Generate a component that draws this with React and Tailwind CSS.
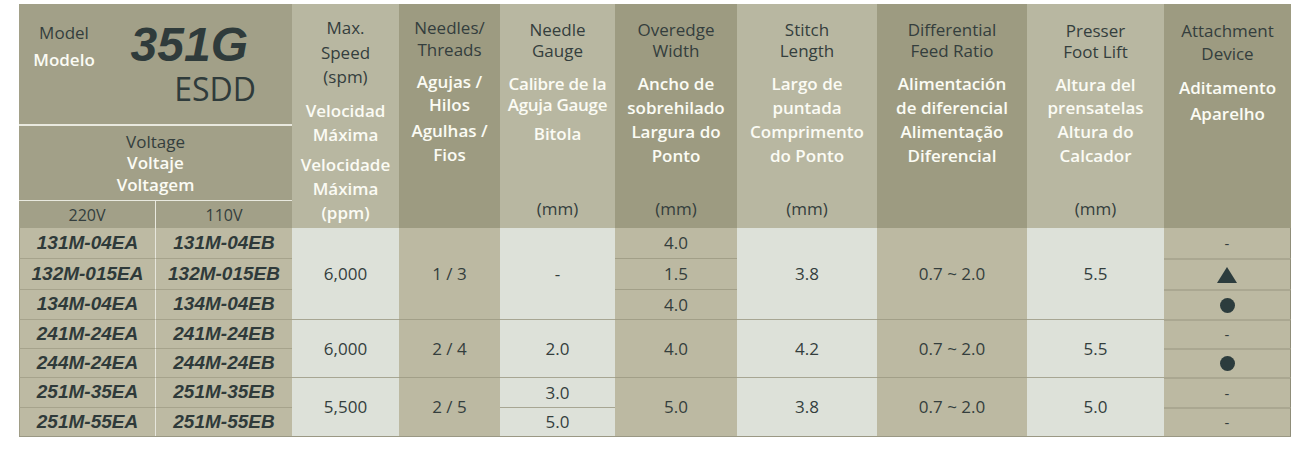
import React from 'react';

const DARK = 'text-[#343e3d]';
const WHITE = 'text-[#fbfbf4] font-semibold';

// header columns: each group of lines gets its own spacing
const headers = [
  {
    bg: 'bg-[#b8b7a1]', pt: 'pt-[12px]',
    groups: [
      { lines: ['Max.', 'Speed', '(spm)'], cls: 'leading-[24.5px]' },
      { lines: ['Velocidad', 'Máxima'], cls: 'mt-[9px] leading-[24px]', white: true },
      { lines: ['Velocidade', 'Máxima', '(ppm)'], cls: 'mt-[6px] leading-[24px]', white: true },
    ],
  },
  {
    bg: 'bg-[#9d9b81]', pt: 'pt-[13px]',
    groups: [
      { lines: ['Needles/', 'Threads'], cls: 'leading-[22px]' },
      { lines: ['Agujas /', 'Hilos'], cls: 'mt-[9px] leading-[23px]', white: true },
      { lines: ['Agulhas /', 'Fios'], cls: 'mt-[3px] leading-[24px]', white: true },
    ],
  },
  {
    bg: 'bg-[#b8b7a1]', pt: 'pt-[15px]', mm: true,
    groups: [
      { lines: ['Needle', 'Gauge'], cls: 'leading-[21px]' },
      { lines: ['Calibre de la', 'Aguja Gauge'], cls: 'mt-[12px] leading-[21px] tracking-[-0.3px]', white: true },
      { lines: ['Bitola'], cls: 'mt-[7px] leading-[24px]', white: true },
    ],
  },
  {
    bg: 'bg-[#9d9b81]', pt: 'pt-[15px]', mm: true,
    groups: [
      { lines: ['Overedge', 'Width'], cls: 'leading-[21px]' },
      { lines: ['Ancho de', 'sobrehilado'], cls: 'mt-[11px] leading-[24px]', white: true },
      { lines: ['Largura do', 'Ponto'], cls: 'leading-[24px]', white: true },
    ],
  },
  {
    bg: 'bg-[#b8b7a1]', pt: 'pt-[15px]', mm: true,
    groups: [
      { lines: ['Stitch', 'Length'], cls: 'leading-[21px]' },
      { lines: ['Largo de', 'puntada'], cls: 'mt-[11px] leading-[24px]', white: true },
      { lines: ['Comprimento', 'do Ponto'], cls: 'leading-[24px]', white: true },
    ],
  },
  {
    bg: 'bg-[#9d9b81]', pt: 'pt-[15px]',
    groups: [
      { lines: ['Differential', 'Feed Ratio'], cls: 'leading-[21px]' },
      { lines: ['Alimentación', 'de diferencial'], cls: 'mt-[11px] leading-[24px]', white: true },
      { lines: ['Alimentação', 'Diferencial'], cls: 'leading-[24px]', white: true },
    ],
  },
  {
    bg: 'bg-[#b8b7a1]', pt: 'pt-[16px]', mm: true,
    groups: [
      { lines: ['Presser', 'Foot Lift'], cls: 'leading-[21px]' },
      { lines: ['Altura del', 'prensatelas'], cls: 'mt-[11px] leading-[23px]', white: true },
      { lines: ['Altura do', 'Calcador'], cls: 'mt-[1px] leading-[24px]', white: true },
    ],
  },
  {
    bg: 'bg-[#9d9b81]', pt: 'pt-[15px]',
    groups: [
      { lines: ['Attachment', 'Device'], cls: 'leading-[23px]' },
      { lines: ['Aditamento', 'Aparelho'], cls: 'mt-[10px] leading-[26px]', white: true },
    ],
  },
];

function HeaderCol({ bg, pt, groups, mm }) {
  return (
    <div className={`row-span-3 flex flex-col items-center text-center text-[17px] pb-[7px] ${bg} ${pt}`}>
      {groups.map((g, i) => (
        <div key={i} className={`${g.cls} ${g.white ? WHITE : DARK}`}>
          {g.lines.map((l) => (
            <div key={l} className="whitespace-nowrap">{l}</div>
          ))}
        </div>
      ))}
      {mm && <div className={`mt-auto leading-[24px] ${DARK}`}>(mm)</div>}
    </div>
  );
}

function Code({ children, left, top }) {
  return (
    <div
      className={`flex items-center justify-center bg-[#bdbaa3] font-['Liberation_Sans',sans-serif] font-bold italic text-[19px] text-[#2f3a3a] ${
        top ? '' : 'border-t border-[#a6a38c]'
      } ${left ? 'border-l border-r border-l-[#a09d86] border-r-[#e6e6dc]' : ''}`}
    >
      {children}
    </div>
  );
}

function Light({ children, span = '', top }) {
  return (
    <div
      className={`flex items-center justify-center bg-[#dde1d9] text-[17px] ${DARK} ${span} ${
        top ? '' : 'border-t border-[#a7a693]'
      }`}
    >
      {children}
    </div>
  );
}

function Tan({ children, span = '', top }) {
  return (
    <div
      className={`flex items-center justify-center bg-[#bcb9a2] text-[17px] ${DARK} ${span} ${
        top ? '' : 'border-t border-[#a29f88]'
      }`}
    >
      {children}
    </div>
  );
}

function Attach({ children, top }) {
  return (
    <div
      className={`flex items-center justify-center bg-[#bcb9a2] text-[15px] border-r border-r-[#8f8d79] ${DARK} ${
        top ? '' : 'border-t-2 border-t-[#aaa791]'
      }`}
    >
      {children}
    </div>
  );
}

const Dot = () => <span className="block w-[15px] h-[15px] rounded-full bg-[#2c3c3d]" />;
const Tri = () => (
  <svg width="20" height="16" viewBox="0 0 20 16">
    <path d="M10 0 L20 16 L0 16 Z" fill="#2c3c3d" />
  </svg>
);

export default function App() {
  return (
    <div className="bg-white w-[1302px] h-[450px] pl-[19px] pt-[4px] font-['Open_Sans',sans-serif]">
      <div className="grid grid-cols-[137px_136px_107px_101px_115px_122px_140px_150px_137px_127px] grid-rows-[122px_75px_27px_30px_31px_30px_29px_29px_30px_29px] w-[1272px] border-b border-[#9a9884]">
        {/* model block */}
        <div className="col-span-2 flex bg-[#a2a088] border-b-2 border-[#e9e9df]">
          <div className="w-[90px] pt-[15px] text-center text-[17px] leading-[27px]">
            <div className={DARK}>Model</div>
            <div className={WHITE}>Modelo</div>
          </div>
          <div className="flex-1 flex flex-col items-end pr-[36px] pt-[17px]">
            <div className="mr-[8px] font-['Liberation_Sans',sans-serif] font-bold italic text-[48px] leading-[48px] text-[#2f3b3b]">
              351G
            </div>
            <div className="mt-[4px] text-[32px] leading-[32px] text-[#2f3b3b]">ESDD</div>
          </div>
        </div>
        {headers.map((h, i) => (
          <HeaderCol key={i} {...h} />
        ))}
        <div className="col-span-2 flex flex-col items-center justify-center bg-[#a2a088] border-b border-[#e9e9df] text-[17px] leading-[21.5px]">
          <div className={DARK}>Voltage</div>
          <div className={WHITE}>Voltaje</div>
          <div className={WHITE}>Voltagem</div>
        </div>
        <div className={`flex items-center justify-center bg-[#a2a088] border-r border-[#e9e9df] text-[16px] ${DARK}`}>220V</div>
        <div className={`flex items-center justify-center bg-[#a2a088] text-[16px] ${DARK}`}>110V</div>

        {/* group 1 */}
        <Code left top>131M-04EA</Code>
        <Code top>131M-04EB</Code>
        <Light span="row-span-3" top>6,000</Light>
        <Tan span="row-span-3" top>1 / 3</Tan>
        <Light span="row-span-3" top>-</Light>
        <Tan top>4.0</Tan>
        <Light span="row-span-3" top>3.8</Light>
        <Tan span="row-span-3" top>0.7 ~ 2.0</Tan>
        <Light span="row-span-3" top>5.5</Light>
        <Attach top>-</Attach>

        <Code left>132M-015EA</Code>
        <Code>132M-015EB</Code>
        <Tan>1.5</Tan>
        <Attach><Tri /></Attach>

        <Code left>134M-04EA</Code>
        <Code>134M-04EB</Code>
        <Tan>4.0</Tan>
        <Attach><Dot /></Attach>

        {/* group 2 */}
        <Code left>241M-24EA</Code>
        <Code>241M-24EB</Code>
        <Light span="row-span-2">6,000</Light>
        <Tan span="row-span-2">2 / 4</Tan>
        <Light span="row-span-2">2.0</Light>
        <Tan span="row-span-2">4.0</Tan>
        <Light span="row-span-2">4.2</Light>
        <Tan span="row-span-2">0.7 ~ 2.0</Tan>
        <Light span="row-span-2">5.5</Light>
        <Attach>-</Attach>

        <Code left>244M-24EA</Code>
        <Code>244M-24EB</Code>
        <Attach><Dot /></Attach>

        {/* group 3 */}
        <Code left>251M-35EA</Code>
        <Code>251M-35EB</Code>
        <Light span="row-span-2">5,500</Light>
        <Tan span="row-span-2">2 / 5</Tan>
        <Light>3.0</Light>
        <Tan span="row-span-2">5.0</Tan>
        <Light span="row-span-2">3.8</Light>
        <Tan span="row-span-2">0.7 ~ 2.0</Tan>
        <Light span="row-span-2">5.0</Light>
        <Attach>-</Attach>

        <Code left>251M-55EA</Code>
        <Code>251M-55EB</Code>
        <Light>5.0</Light>
        <Attach>-</Attach>
      </div>
    </div>
  );
}
